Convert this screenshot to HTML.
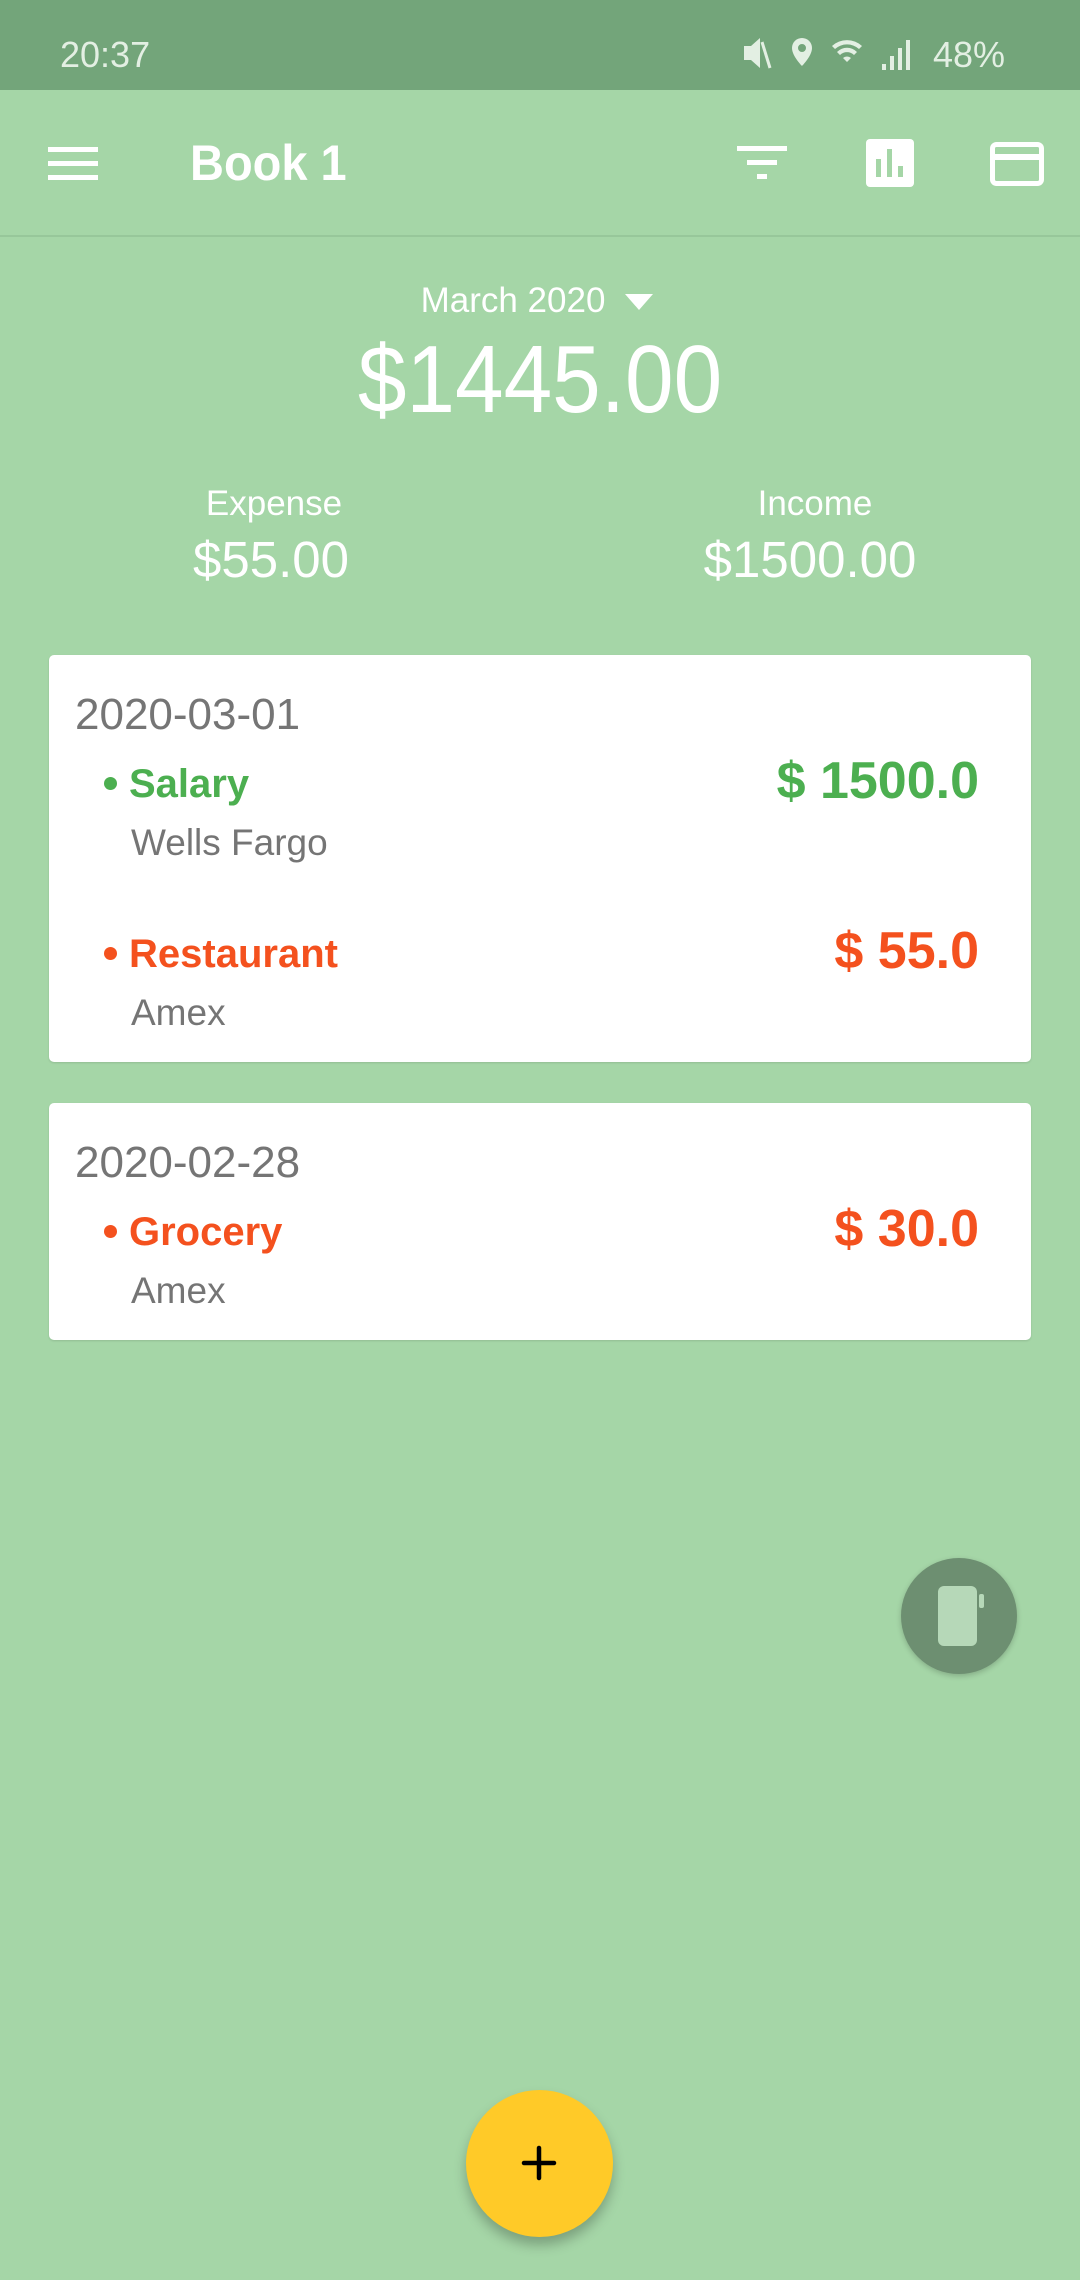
<!DOCTYPE html>
<html><head><meta charset="utf-8"><style>
*{margin:0;padding:0;box-sizing:border-box}
body{width:1080px;height:2280px;background:#a5d6a7;font-family:"Liberation Sans",sans-serif;position:relative;overflow:hidden}
.a{position:absolute;white-space:nowrap}
.sb{position:absolute;left:0;top:0;width:1080px;height:90px;background:#73a57a}
.ab{position:absolute;left:0;top:90px;width:1080px;height:147px;border-bottom:2px solid #97c79a}
.card{position:absolute;left:49px;width:982px;background:#fff;border-radius:5px;box-shadow:0 1px 2px rgba(0,0,0,.12)}
.gray{color:#757575}
.g{color:#4caf50;font-weight:bold}
.o{color:#f4511e;font-weight:bold}
.dot{position:absolute;width:13px;height:13px;border-radius:50%}
</style></head><body>
<div class="sb"></div>
<div class="a" style="left:60px;top:34px;font-size:36px;color:#e3efe3">20:37</div>
<svg class="a" style="left:740px;top:34px" width="270" height="40" viewBox="0 0 270 40">
<g fill="#e3efe3"><path d="M4 12h7l9-8v30l-9-8H4z"/><path d="M22 8l8 26" stroke="#e3efe3" stroke-width="3"/>
<path d="M62 4a10 10 0 0 1 10 10c0 8-10 18-10 18S52 22 52 14A10 10 0 0 1 62 4zm0 6a4 4 0 1 0 0 8 4 4 0 1 0 0-8z"/>
<path d="M92 12a22 22 0 0 1 30 0l-3 3a18 18 0 0 0-24 0zM97 18a14 14 0 0 1 20 0l-3 3a10 10 0 0 0-14 0zM103 24a6 6 0 0 1 8 0l-4 4z"/>
<rect x="142" y="30" width="4" height="6"/><rect x="150" y="22" width="4" height="14"/><rect x="158" y="14" width="4" height="22"/><rect x="166" y="6" width="4" height="30"/></g>
<text x="193" y="33" font-size="36" fill="#e3efe3" font-family="Liberation Sans">48%</text></svg>
<div class="ab"></div>
<svg class="a" style="left:48px;top:145px" width="50" height="38"><g fill="#fff"><rect y="2" width="50" height="5"/><rect y="16" width="50" height="5"/><rect y="30" width="50" height="5"/></g></svg>
<div class="a" style="left:190px;top:134px;font-size:50px;font-weight:bold;color:#fff;transform:scaleX(0.94);transform-origin:left">Book 1</div>
<svg class="a" style="left:737px;top:146px" width="50" height="36"><g fill="#fff"><rect y="0" width="50" height="5"/><rect x="10" y="14" width="30" height="5"/><rect x="20" y="28" width="10" height="5"/></g></svg>
<svg class="a" style="left:866px;top:139px" width="48" height="48"><rect width="48" height="48" rx="4" fill="#fff"/><g fill="#a5d6a7"><rect x="10" y="20" width="5" height="18"/><rect x="21" y="10" width="5" height="28"/><rect x="32" y="27" width="5" height="11"/></g></svg>
<svg class="a" style="left:990px;top:142px" width="54" height="44"><rect x="2.5" y="2.5" width="49" height="39" rx="4" fill="none" stroke="#fff" stroke-width="5"/><rect x="2" y="12" width="50" height="6" fill="#fff"/></svg>
<div class="a" style="left:0;width:1026px;text-align:center;top:281px;font-size:35px;color:#fff">March 2020</div>
<svg class="a" style="left:625px;top:294px" width="28" height="16"><path d="M0 0h28L14 16z" fill="#fff"/></svg>
<div class="a" style="left:0;width:1080px;text-align:center;top:325px;font-size:96px;color:#fff;transform:scaleX(0.91)">$1445.00</div>
<div class="a" style="left:0;width:548px;text-align:center;top:484px;font-size:35px;color:#fff">Expense</div>
<div class="a" style="left:0;width:542px;text-align:center;top:530px;font-size:51px;color:#fff">$55.00</div>
<div class="a" style="left:540px;width:550px;text-align:center;top:484px;font-size:35px;color:#fff">Income</div>
<div class="a" style="left:540px;width:540px;text-align:center;top:530px;font-size:51px;color:#fff">$1500.00</div>

<div class="card" style="top:655px;height:407px">
<div class="a gray" style="left:26px;top:35px;font-size:44px">2020-03-01</div>
<div class="dot" style="left:55px;top:122px;background:#4caf50"></div>
<div class="a g" style="left:80px;top:107px;font-size:40px">Salary</div>
<div class="a g" style="right:52px;top:96px;font-size:52px">$ 1500.0</div>
<div class="a gray" style="left:82px;top:167px;font-size:37px">Wells Fargo</div>
<div class="dot" style="left:55px;top:292px;background:#f4511e"></div>
<div class="a o" style="left:80px;top:277px;font-size:40px">Restaurant</div>
<div class="a o" style="right:52px;top:266px;font-size:52px">$ 55.0</div>
<div class="a gray" style="left:82px;top:337px;font-size:37px">Amex</div>
</div>
<div class="card" style="top:1103px;height:237px">
<div class="a gray" style="left:26px;top:35px;font-size:44px">2020-02-28</div>
<div class="dot" style="left:55px;top:122px;background:#f4511e"></div>
<div class="a o" style="left:80px;top:107px;font-size:40px">Grocery</div>
<div class="a o" style="right:52px;top:96px;font-size:52px">$ 30.0</div>
<div class="a gray" style="left:82px;top:167px;font-size:37px">Amex</div>
</div>

<div class="a" style="left:901px;top:1558px;width:116px;height:116px;border-radius:50%;background:#6d8f71;box-shadow:0 2px 6px rgba(0,0,0,.2)"></div>
<div class="a" style="left:938px;top:1586px;width:39px;height:60px;border-radius:6px;background:#b6d8b8"></div>
<div class="a" style="left:979px;top:1594px;width:5px;height:14px;border-radius:2px;background:#b6d8b8"></div>

<div class="a" style="left:466px;top:2090px;width:147px;height:147px;border-radius:50%;background:#ffca28;box-shadow:0 8px 12px rgba(0,0,0,.25)"></div>
<svg class="a" style="left:521px;top:2145px" width="36" height="36"><path d="M18 3v30M3 18h30" stroke="#000" stroke-width="4.5" stroke-linecap="round"/></svg>
</body></html>
